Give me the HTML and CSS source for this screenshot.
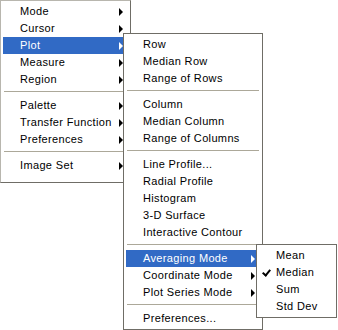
FILE: index.html
```html
<!DOCTYPE html>
<html lang="en">
<head>
  <meta charset="UTF-8">
  <title>Plot menu</title>
  <link rel="stylesheet" href="styles.css">
</head>
<body>
  <div class="menu main">
    <div class="item sub">Mode</div>
    <div class="item sub">Cursor</div>
    <div class="item sub active">Plot</div>
    <div class="item sub">Measure</div>
    <div class="item sub">Region</div>
    <div class="sep"></div>
    <div class="item sub">Palette</div>
    <div class="item sub">Transfer Function</div>
    <div class="item sub">Preferences</div>
    <div class="sep"></div>
    <div class="item sub">Image Set</div>
  </div>

  <div class="menu plot">
    <div class="item">Row</div>
    <div class="item">Median Row</div>
    <div class="item">Range of Rows</div>
    <div class="sep"></div>
    <div class="item">Column</div>
    <div class="item">Median Column</div>
    <div class="item">Range of Columns</div>
    <div class="sep"></div>
    <div class="item">Line Profile...</div>
    <div class="item">Radial Profile</div>
    <div class="item">Histogram</div>
    <div class="item">3-D Surface</div>
    <div class="item">Interactive Contour</div>
    <div class="sep"></div>
    <div class="item sub active">Averaging Mode</div>
    <div class="item sub">Coordinate Mode</div>
    <div class="item sub">Plot Series Mode</div>
    <div class="sep"></div>
    <div class="item">Preferences...</div>
  </div>

  <div class="menu avg">
    <div class="item">Mean</div>
    <div class="item checked">Median</div>
    <div class="item">Sum</div>
    <div class="item">Std Dev</div>
  </div>
</body>
</html>
```

FILE: styles.css
```css
body { margin: 0; background: #fff; font-family: "Liberation Sans", Arial, sans-serif; font-size: 11px; letter-spacing: 0.35px; color: #000; }

.menu { position: absolute; background: #fff; border: 1px solid #6f6d66; padding: 2px; box-sizing: border-box; }
.main { left: 0; top: 0; width: 131px; padding-bottom: 8px; border-left-color: #b8b6ae; border-top-color: #b8b6ae; }
.plot { left: 123px; top: 33px; width: 140px; }
.avg { left: 256px; top: 244px; width: 81px; }

.item { position: relative; height: 17px; line-height: 17px; padding-left: 17px; white-space: nowrap; }
.item.active { background: #316ac5; color: #fff; }

.sub::after {
  content: ""; position: absolute; right: 5px; top: 5px;
  border-left: 4px solid #000; border-top: 4px solid transparent; border-bottom: 4px solid transparent;
}
.sub.active::after { border-left-color: #fff; }

.checked::before {
  content: ""; position: absolute; left: 5px; top: 4px; width: 3px; height: 6px;
  border-right: 2px solid #000; border-bottom: 2px solid #000; transform: rotate(40deg);
}

.sep { height: 9px; position: relative; }
.sep::after { content: ""; position: absolute; left: 1px; right: 1px; top: 3px; border-top: 1px solid #aca899; }
```
